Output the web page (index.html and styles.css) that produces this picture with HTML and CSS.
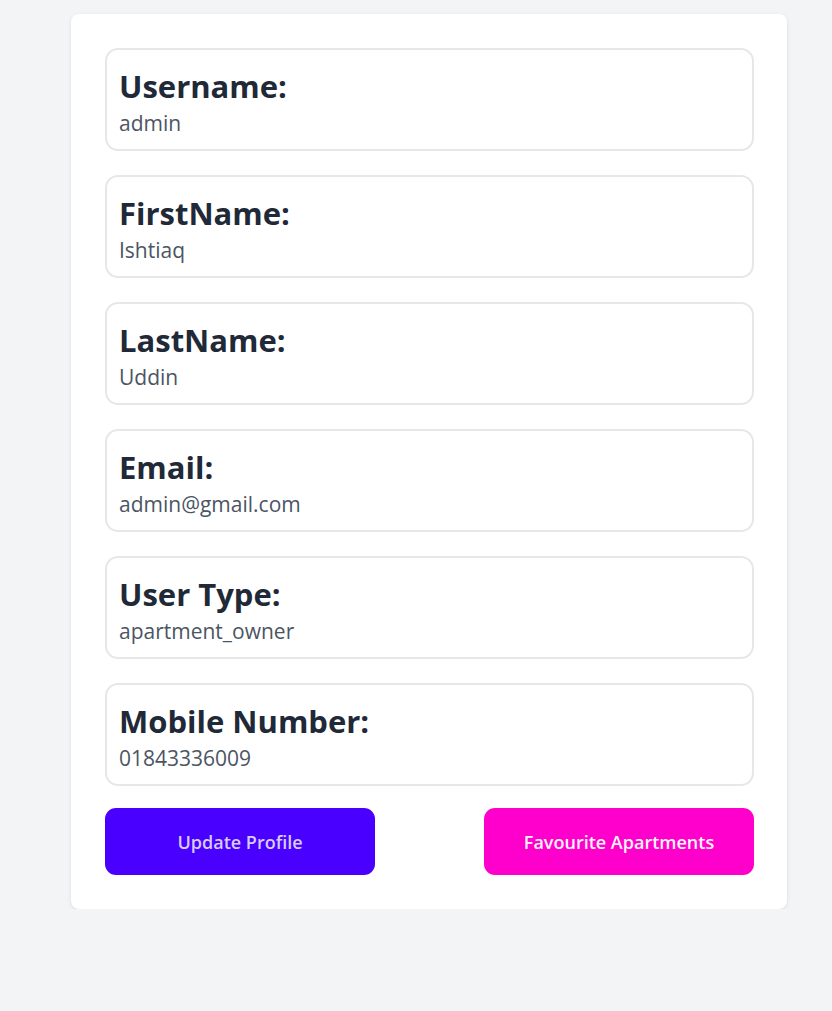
FILE: index.html
```html
<!DOCTYPE html>
<html lang="en">
<head>
<meta charset="utf-8">
<title>Profile</title>
<link rel="stylesheet" href="styles.css">
</head>
<body>
<main class="page">
  <section class="card">
    <div class="field">
      <h2 class="label">Username:</h2>
      <p class="value">admin</p>
    </div>
    <div class="field">
      <h2 class="label">FirstName:</h2>
      <p class="value">Ishtiaq</p>
    </div>
    <div class="field">
      <h2 class="label">LastName:</h2>
      <p class="value">Uddin</p>
    </div>
    <div class="field">
      <h2 class="label">Email:</h2>
      <p class="value">admin@gmail.com</p>
    </div>
    <div class="field">
      <h2 class="label">User Type:</h2>
      <p class="value">apartment_owner</p>
    </div>
    <div class="field">
      <h2 class="label">Mobile Number:</h2>
      <p class="value">01843336009</p>
    </div>
    <div class="actions">
      <button class="btn btn-update">Update Profile</button>
      <button class="btn btn-fav">Favourite Apartments</button>
    </div>
  </section>
</main>
</body>
</html>
```
FILE: styles.css
```css
* { box-sizing: border-box; }
html, body {
  margin: 0;
  padding: 0;
  background: #f3f4f6;
  font-family: "Open Sans", "Noto Sans", sans-serif;
}
.page {
  padding: 14px 0 0 71px;
}
.card {
  width: 716px;
  background: #ffffff;
  border-radius: 8px;
  padding: 34px 33px 34px 34px;
  box-shadow: 0 1px 4px rgba(0, 0, 0, 0.08), 0 1px 2px rgba(0, 0, 0, 0.04);
  display: flex;
  flex-direction: column;
  gap: 24px;
}
.field {
  height: 103px;
  border: 2px solid #e5e7eb;
  border-radius: 13px;
  padding: 16px 12px 0 12px;
}
.label {
  margin: 0;
  font-size: 31px;
  line-height: 40px;
  font-weight: 700;
  color: #1f2937;
}
.value {
  margin: 3px 0 0 0;
  font-size: 21px;
  line-height: 28px;
  color: #4b5563;
}
.actions {
  display: flex;
  justify-content: space-between;
  margin-top: -2px;
}
.btn {
  width: 270px;
  height: 67px;
  border: none;
  border-radius: 11px;
  font-family: inherit;
  font-size: 18px;
  font-weight: 600;
  cursor: pointer;
}
.btn-update {
  background: #4a00ff;
  color: #d6ccff;
}
.btn-fav {
  background: #ff00cc;
  color: #fff4fb;
}
```
